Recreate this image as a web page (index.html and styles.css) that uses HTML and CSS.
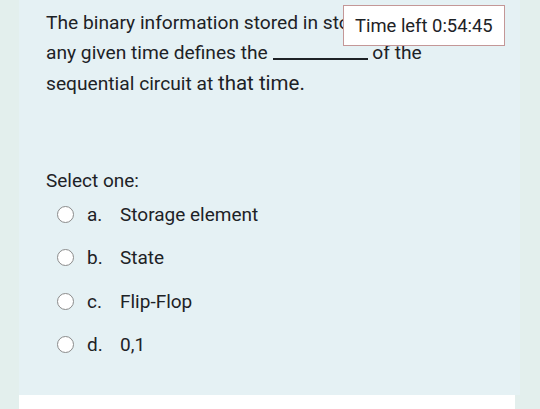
FILE: index.html
```html
<!DOCTYPE html>
<html>
<head>
<meta charset="utf-8">
<link rel="stylesheet" href="styles.css">
</head>
<body>
<div class="page">
  <div class="card">
    <p class="question">The binary information stored in storage elements at<br>any given time defines the <span class="blank"></span> of the<br>sequential circuit at <span class="big">that time.</span></p>
    <div class="prompt">Select one:</div>
    <div class="options">
      <label class="option"><span class="radio"></span><span class="letter">a.</span><span class="text">Storage element</span></label>
      <label class="option"><span class="radio"></span><span class="letter">b.</span><span class="text">State</span></label>
      <label class="option"><span class="radio"></span><span class="letter">c.</span><span class="text">Flip-Flop</span></label>
      <label class="option"><span class="radio"></span><span class="letter">d.</span><span class="text">0,1</span></label>
    </div>
  </div>
  <div class="next"></div>
  <div class="timer">Time left 0:54:45</div>
</div>
</body>
</html>
```

FILE: styles.css
```css
html, body {
  margin: 0;
  padding: 0;
}
body {
  background: #e3efed;
  font-family: Roboto, "Noto Sans", sans-serif;
  color: #1d2226;
  width: 540px;
  height: 409px;
  overflow: hidden;
}
.page {
  position: relative;
  padding: 0 20px 0 19px;
}
.card {
  background: #e5f1f4;
  height: 395px;
  padding-left: 27px;
  box-sizing: border-box;
  padding-top: 8px;
  overflow: hidden;
}
.question {
  margin: 0;
  font-size: 19.2px;
  line-height: 30px;
  white-space: nowrap;
}
.big {
  font-size: 20.5px;
}
.blank {
  display: inline-block;
  width: 95px;
  border-bottom: 2px solid #1d2226;
  vertical-align: -1px;
}
.prompt {
  margin-top: 72px;
  font-size: 19px;
  line-height: 20px;
}
.options {
  margin-top: 1.5px;
  display: flex;
  flex-direction: column;
}
.option {
  height: 43.5px;
  display: flex;
  align-items: center;
  font-size: 19px;
}
.radio {
  width: 17px;
  height: 17px;
  box-sizing: border-box;
  border: 1.5px solid #8b8b8b;
  border-radius: 50%;
  background: #ffffff;
  margin-left: 11px;
  margin-right: 13px;
}
.letter {
  width: 33px;
}
.next {
  background: #ffffff;
  height: 14px;
  margin-right: 5px;
}
.timer {
  position: absolute;
  top: 5px;
  left: 343px;
  width: 162px;
  height: 41px;
  box-sizing: border-box;
  border: 1px solid #c49797;
  background: #ffffff;
  font-size: 18.4px;
  line-height: 39px;
  padding-left: 11px;
}
```
